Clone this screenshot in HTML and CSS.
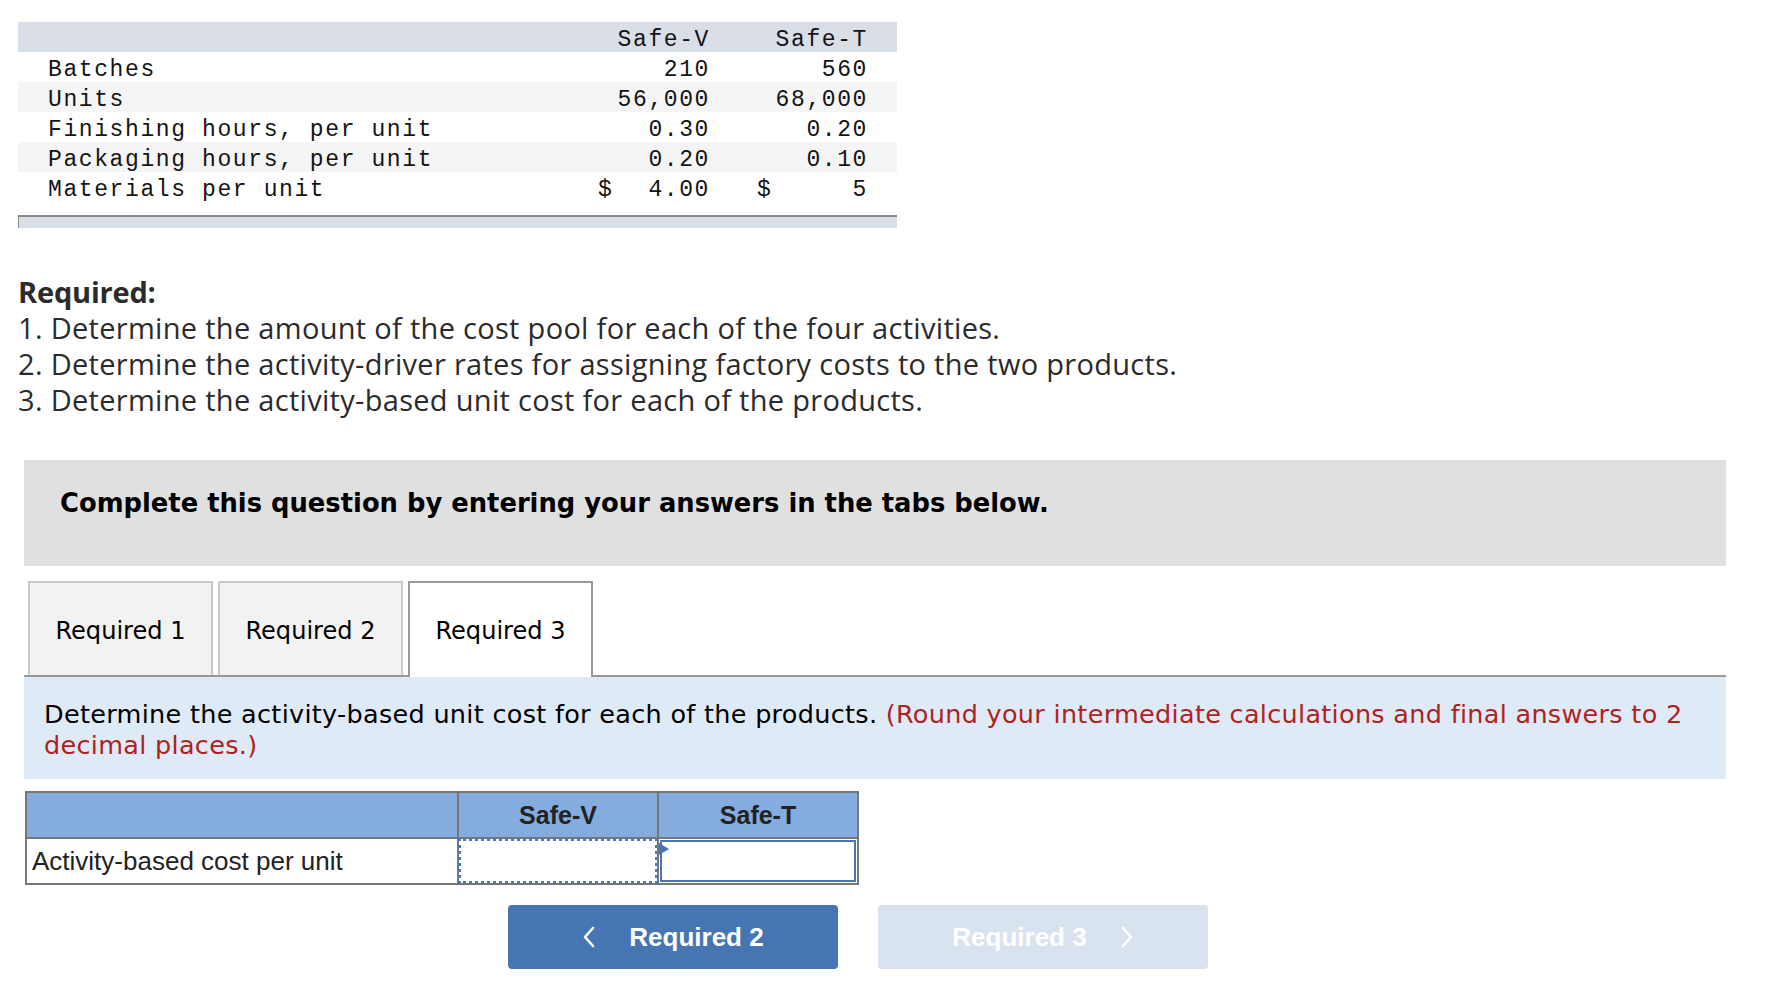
FILE: index.html
```html
<!DOCTYPE html>
<html lang="en">
<head>
<meta charset="utf-8">
<title>Activity-based costing</title>
<link rel="stylesheet" href="styles.css">
</head>
<body>
<div class="data">
  <div class="drow head"><span class="lbl"></span><span class="val"><span></span><span>Safe-V</span></span><span class="val"><span></span><span>Safe-T</span></span></div>
  <div class="drow"><span class="lbl">Batches</span><span class="val"><span></span><span>210</span></span><span class="val"><span></span><span>560</span></span></div>
  <div class="drow alt"><span class="lbl">Units</span><span class="val"><span></span><span>56,000</span></span><span class="val"><span></span><span>68,000</span></span></div>
  <div class="drow"><span class="lbl">Finishing hours, per unit</span><span class="val"><span></span><span>0.30</span></span><span class="val"><span></span><span>0.20</span></span></div>
  <div class="drow alt"><span class="lbl">Packaging hours, per unit</span><span class="val"><span></span><span>0.20</span></span><span class="val"><span></span><span>0.10</span></span></div>
  <div class="drow"><span class="lbl">Materials per unit</span><span class="val"><span>$</span><span>4.00</span></span><span class="val"><span>$</span><span>5</span></span></div>
</div>
<div class="scrollbar"></div>

<div class="required">
  <h3>Required:</h3>
  <p>1. Determine the amount of the cost pool for each of the four activities.</p>
  <p>2. Determine the activity-driver rates for assigning factory costs to the two products.</p>
  <p>3. Determine the activity-based unit cost for each of the products.</p>
</div>

<div class="prompt">Complete this question by entering your answers in the tabs below.</div>

<div class="tabs">
  <div class="tab">Required 1</div>
  <div class="tab">Required 2</div>
  <div class="tab active">Required 3</div>
</div>
<div class="instr">Determine the activity-based unit cost for each of the products. <span class="red">(Round your intermediate calculations and final answers to 2<br>decimal places.)</span></div>

<table class="answer">
  <tr class="ahead"><th class="c1"></th><th class="c2">Safe-V</th><th class="c3">Safe-T</th></tr>
  <tr class="abody"><td class="c1">Activity-based cost per unit</td><td class="c2 cell"><div class="focus"></div></td><td class="c3 cell"><div class="inp"></div><span class="tri"></span></td></tr>
</table>

<div class="nav">
  <div class="btn"><svg class="chev" width="14" height="24" viewBox="0 0 14 24"><polyline points="11,3 3,12 11,21" fill="none" stroke="#fff" stroke-width="2.6" stroke-linecap="round" stroke-linejoin="round"/></svg><span>Required 2</span></div>
  <div class="btn disabled"><span>Required 3</span><svg class="chev" width="14" height="24" viewBox="0 0 14 24"><polyline points="3,3 11,12 3,21" fill="none" stroke="#fff" stroke-width="2.6" stroke-linecap="round" stroke-linejoin="round"/></svg></div>
</div>
</body>
</html>
```

FILE: styles.css
```css
* { box-sizing: border-box; }
html, body { margin: 0; padding: 0; background: #fff; }
body { font-family: "Liberation Sans", Arial, sans-serif; color: #222; }

.data {
  margin: 22px 0 0 18px;
  width: 879px;
  font-family: "Liberation Mono", "Courier New", monospace;
  font-size: 23px;
  letter-spacing: 1.6px;
  color: #141414;
}
.drow {
  display: flex;
  height: 30px;
  padding-top: 7px;
  line-height: 22px;
  white-space: pre;
}
.drow.head { background: #d9dee7; padding-top: 6px; line-height: 24px; }
.drow.alt { background: #f5f5f5; }
.lbl { width: 572px; padding-left: 30px; }
.val { width: 120px; display: flex; justify-content: space-between; padding-left: 8px; }
.val + .val { margin-left: 39px; width: 119px; }

.scrollbar {
  margin: 13px 0 0 18px;
  width: 879px;
  height: 13px;
  border-top: 2px solid #8a8a8a;
  border-left: 1px solid #8a8a8a;
  background: #d9dee7;
}

.required {
  margin: 46px 0 0 18px;
  font-family: "Open Sans", sans-serif;
  font-size: 29px;
  letter-spacing: 0.3px;
  line-height: 36px;
  color: #2b2b2b;
}
.required h3 { margin: 0; font-size: 29px; font-weight: 700; letter-spacing: -0.2px; }
.required p { margin: 0; }

.prompt {
  margin: 42px 0 0 24px;
  width: 1702px;
  height: 106px;
  background: #e0e0e0;
  padding: 28px 36px 0;
  font-family: "DejaVu Sans", Verdana, sans-serif;
  font-weight: bold;
  font-size: 25.8px;
  line-height: 30px;
  color: #000;
}

.tabs {
  margin: 15px 0 0 24px;
  width: 1702px;
  height: 96px;
  display: flex;
  align-items: flex-start;
  gap: 5px;
  padding-left: 4px;
  border-bottom: 2px solid #999;
}
.tab {
  width: 185px;
  height: 94px;
  padding-top: 4px;
  background: #f2f2f2;
  border: 2px solid #c8c8c8;
  border-bottom: none;
  display: flex;
  align-items: center;
  justify-content: center;
  font-family: "DejaVu Sans", Verdana, sans-serif;
  font-size: 24.1px;
  color: #000;
}
.tab.active {
  height: 96px;
  margin-bottom: -2px;
  background: #fff;
  border-color: #999;
  padding-bottom: 2px;
}

.instr {
  margin-left: 24px;
  width: 1702px;
  height: 102px;
  background: #dfeaf7;
  padding: 22px 20px 0;
  font-family: "DejaVu Sans", Verdana, sans-serif;
  font-size: 25.5px;
  letter-spacing: 0.3px;
  line-height: 31px;
  color: #000;
}
.red { color: #b0221d; }

.answer {
  margin: 12px 0 0 25px;
  border-collapse: collapse;
  font-family: "Liberation Sans", Arial, sans-serif;
  color: #222;
}
.answer th, .answer td { border: 2px solid #777; padding: 0; }
.answer .c1 { width: 432px; }
.answer .c2 { width: 200px; }
.answer .c3 { width: 200px; }
.ahead th { height: 46px; background: #84acde; font-size: 25px; font-weight: bold; text-align: center; }
.abody td { height: 46px; font-size: 26px; }
.abody .c1 { padding-left: 5px; }
.cell { position: relative; }
.focus {
  position: absolute;
  inset: -1px -1px -1px -1px;
  border: 3px dotted #4a7ab8;
}
.inp {
  position: absolute;
  inset: 1px 1px 1px 1px;
  border: 2px solid #4a76b5;
}
.tri {
  position: absolute;
  left: 0;
  top: 4px;
  width: 0;
  height: 0;
  border-top: 6px solid transparent;
  border-bottom: 6px solid transparent;
  border-left: 10px solid #4a76b5;
}

.nav {
  display: flex;
  gap: 40px;
  margin: 20px 0 0 508px;
}
.btn {
  width: 330px;
  height: 64px;
  border-radius: 4px;
  background: #4675b3;
  color: #fff;
  font-family: "Liberation Sans", Arial, sans-serif;
  font-weight: bold;
  font-size: 26px;
  display: flex;
  align-items: center;
  justify-content: center;
  gap: 33px;
}
.btn.disabled { background: #d9e3ef; }
.chev { display: block; }
```
